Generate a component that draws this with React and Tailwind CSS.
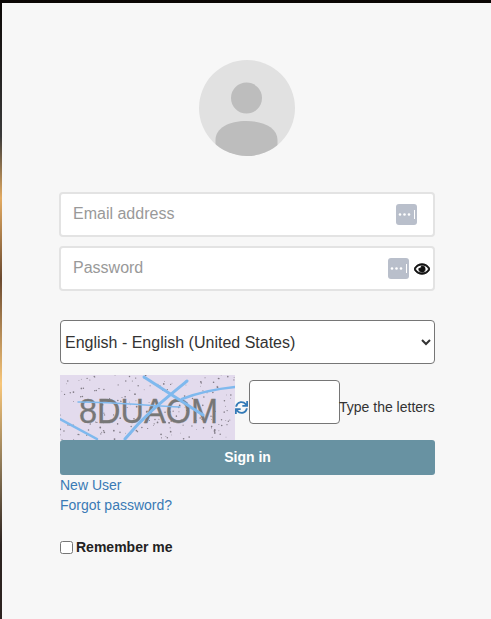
import { FaSync, FaRegEye } from 'react-icons/fa';

// fixed speckle noise for the captcha picture
function makeSpeckles(count) {
    const dots = [];
    let seed = 7;
    const next = () => {
        seed = (seed * 16807) % 2147483647;
        return seed / 2147483647;
    };
    for (let i = 0; i < count; i++) {
        dots.push({ x: next() * 175, y: next() * 65, r: 0.4 + next() * 0.5 });
    }
    return dots;
}

const speckles = makeSpeckles(200);

function Captcha() {
    return (
        <svg width="175" height="65" viewBox="0 0 175 65" className="block shrink-0 bg-[#e3dbed]">
            {speckles.map((d, i) => (
                <circle key={i} cx={d.x} cy={d.y} r={d.r} fill="#807b85" />
            ))}
            <text
                x="19"
                y="48"
                fill="#777777"
                stroke="#777777"
                strokeWidth="0.3"
                fontFamily="'Liberation Sans', sans-serif"
                fontSize="35"
                textLength="139"
                lengthAdjust="spacingAndGlyphs"
            >
                8DUAOM
            </text>
            <g fill="none" stroke="#7fb9ee" strokeLinecap="round">
                <path d="M18 27 C60 27 90 31 120 32" strokeWidth="1.5" />
                <path d="M84 2 L143 40" strokeWidth="3" />
                <path d="M127 6 C100 28 85 40 65 64" strokeWidth="3" />
                <path d="M122 24 C140 17 155 14 175 12" strokeWidth="2.5" />
                <path d="M0 44 L37 64" strokeWidth="2.5" />
            </g>
        </svg>
    );
}

function KeyBadge() {
    return (
        <svg width="21" height="21" viewBox="0 0 21 21">
            <rect width="21" height="21" rx="3" fill="#b9bfcb" />
            <circle cx="4" cy="10.5" r="1.3" fill="#fff" />
            <circle cx="8.5" cy="10.5" r="1.3" fill="#fff" />
            <circle cx="13" cy="10.5" r="1.3" fill="#fff" />
            <rect x="18" y="6" width="1" height="9" fill="#fff" />
        </svg>
    );
}

function Avatar() {
    return (
        <svg width="96" height="96" viewBox="0 0 96 96" className="block">
            <defs>
                <clipPath id="avatar-clip">
                    <circle cx="48" cy="48" r="48" />
                </clipPath>
            </defs>
            <circle cx="48" cy="48" r="48" fill="#e1e1e1" />
            <circle cx="47.5" cy="38" r="15.5" fill="#bdbdbd" />
            <g clipPath="url(#avatar-clip)">
                <path d="M16.5 96 L16.5 80 C16.5 68 30 61 47.5 61 C65 61 78.5 68 78.5 80 L78.5 96 Z" fill="#bdbdbd" />
            </g>
        </svg>
    );
}

export default function App() {
    return (
        <div className="w-[491px] h-[619px] overflow-hidden pt-[3px] pl-[2px] bg-[linear-gradient(180deg,#0a0604_0%,#3a3a3a_22%,#e3ab62_32%,#6b4a30_45%,#f8c77a_62%,#8f7a58_75%,#2c2320_88%,#2c2320_100%)] font-['Liberation_Sans',Arial,sans-serif] text-[14px] text-[#333]">
            <div className="h-full bg-[#f7f7f7] pl-[57px] pr-[56px] pt-[57px]">
                <div className="flex justify-center">
                    <Avatar />
                </div>

                <div className="relative mt-[36px] h-[45px]">
                    <input
                        type="text"
                        placeholder="Email address"
                        className="w-full h-full bg-white border-2 border-[#e3e3e3] rounded-[4px] pl-[12px] pb-[2px] text-[16px] outline-none placeholder:text-[#999]"
                    />
                    <div className="absolute left-[337px] top-[12px]">
                        <KeyBadge />
                    </div>
                </div>

                <div className="relative mt-[9px] h-[45px]">
                    <input
                        type="password"
                        placeholder="Password"
                        className="w-full h-full bg-white border-2 border-[#e3e3e3] rounded-[4px] pl-[12px] pb-[2px] text-[16px] outline-none placeholder:text-[#999]"
                    />
                    <div className="absolute left-[329px] top-[12px]">
                        <KeyBadge />
                    </div>
                    <FaRegEye className="absolute left-[355px] top-[15px] w-[16px] h-[16px] text-[#111] stroke-[30]" />
                </div>

                <div className="pl-[1px] mt-[29px]">
                    <select className="w-full h-[44px] bg-white border border-[#767676] rounded-[4px] text-[16px] text-[#333] outline-none">
                        <option>English - English (United States)</option>
                    </select>

                    <div className="flex items-center h-[65px] mt-[11px]">
                        <Captcha />
                        <FaSync className="w-[13px] h-[13px] text-[#337ab7] shrink-0" />
                        <input
                            type="text"
                            className="w-[91px] h-[44px] ml-[1px] -mt-[11px] bg-white border border-[#767676] rounded-[4px] shrink-0 outline-none"
                        />
                        <span className="whitespace-nowrap -ml-[1px]">Type the letters</span>
                    </div>

                    <button className="block w-full h-[35px] bg-[#6892a2] rounded-[3px] text-white font-bold text-[14px]">
                        Sign in
                    </button>

                    <a className="block leading-[20px] text-[#3a7ab5]">New User</a>
                    <a className="block leading-[20px] text-[#3a7ab5]">Forgot password?</a>

                    <label className="flex items-center mt-[22px] font-bold text-[#222]">
                        <input type="checkbox" className="m-0 mr-[3px] w-[13px] h-[13px]" />
                        Remember me
                    </label>
                </div>
            </div>
        </div>
    );
}
